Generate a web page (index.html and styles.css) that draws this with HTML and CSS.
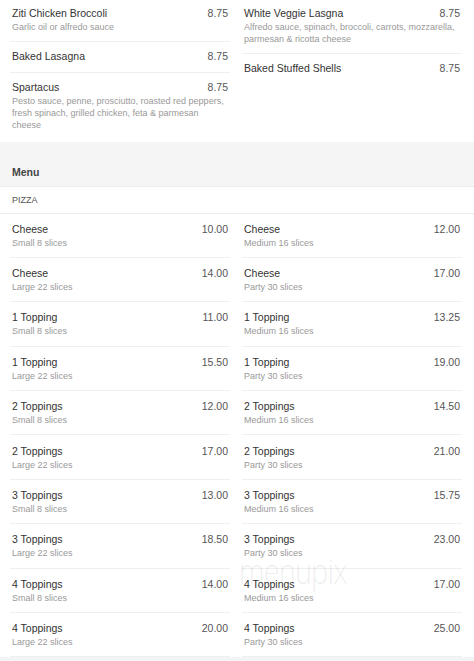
FILE: index.html
```html
<!DOCTYPE html>
<html>
<head>
    <title>Menu</title>
    <link rel="stylesheet" href="styles.css">
</head>
<body>
    <div class="page">
        <div class="items top">
            <div class="col">
                <div class="item">
                    <div class="row"><span class="name">Ziti Chicken Broccoli</span><span class="price">8.75</span></div>
                    <div class="desc">Garlic oil or alfredo sauce</div>
                </div>
                <div class="item">
                    <div class="row"><span class="name">Baked Lasagna</span><span class="price">8.75</span></div>
                </div>
                <div class="item last">
                    <div class="row"><span class="name">Spartacus</span><span class="price">8.75</span></div>
                    <div class="desc">Pesto sauce, penne, prosciutto, roasted red peppers, fresh spinach, grilled chicken, feta &amp; parmesan cheese</div>
                </div>
            </div>
            <div class="col">
                <div class="item">
                    <div class="row"><span class="name">White Veggie Lasgna</span><span class="price">8.75</span></div>
                    <div class="desc">Alfredo sauce, spinach, broccoli, carrots, mozzarella, parmesan &amp; ricotta cheese</div>
                </div>
                <div class="item last">
                    <div class="row"><span class="name">Baked Stuffed Shells</span><span class="price">8.75</span></div>
                </div>
            </div>
        </div>

        <div class="menu-head">Menu</div>
        <div class="category">PIZZA</div>

        <div class="items grid" id="pizza"></div>
        <div class="watermark">menupix</div>
    </div>
    <script>
        const pizzas = [
            ['Cheese', 'Small 8 slices', '10.00'],
            ['Cheese', 'Medium 16 slices', '12.00'],
            ['Cheese', 'Large 22 slices', '14.00'],
            ['Cheese', 'Party 30 slices', '17.00'],
            ['1 Topping', 'Small 8 slices', '11.00'],
            ['1 Topping', 'Medium 16 slices', '13.25'],
            ['1 Topping', 'Large 22 slices', '15.50'],
            ['1 Topping', 'Party 30 slices', '19.00'],
            ['2 Toppings', 'Small 8 slices', '12.00'],
            ['2 Toppings', 'Medium 16 slices', '14.50'],
            ['2 Toppings', 'Large 22 slices', '17.00'],
            ['2 Toppings', 'Party 30 slices', '21.00'],
            ['3 Toppings', 'Small 8 slices', '13.00'],
            ['3 Toppings', 'Medium 16 slices', '15.75'],
            ['3 Toppings', 'Large 22 slices', '18.50'],
            ['3 Toppings', 'Party 30 slices', '23.00'],
            ['4 Toppings', 'Small 8 slices', '14.00'],
            ['4 Toppings', 'Medium 16 slices', '17.00'],
            ['4 Toppings', 'Large 22 slices', '20.00'],
            ['4 Toppings', 'Party 30 slices', '25.00']
        ];
        const list = document.getElementById('pizza');
        pizzas.forEach(p => {
            const item = document.createElement('div');
            item.className = 'item';
            item.innerHTML = '<div class="row"><span class="name">' + p[0] + '</span><span class="price">' + p[2] + '</span></div>'
                + '<div class="desc">' + p[1] + '</div>';
            list.appendChild(item);
        });
    </script>
</body>
</html>
```

FILE: styles.css
```css
body {
    margin: 0;
    background-color: #fff;
    font-family: "Liberation Sans", Arial, sans-serif;
}
.page {
    position: relative;
    border-bottom: 4px solid #f4f4f6;
}
.items {
    padding: 0 12px 0 10px;
}
.items.top {
    display: grid;
    grid-template-columns: 1fr 1fr;
    column-gap: 12px;
    align-items: start;
    margin-top: -1.5px;
    padding-bottom: 3px;
}
.items.grid {
    display: grid;
    grid-template-columns: 1fr 1fr;
    column-gap: 12px;
}
.item {
    padding: 7.5px 2px;
    border-bottom: 1px solid #efefef;
}
.grid .item {
    padding: 8.2px 2px 8.2px;
}
.item.last {
    border-bottom: none;
}
.row {
    display: flex;
    justify-content: space-between;
    line-height: 15px;
}
.name {
    font-size: 10.5px;
    color: #333;
}
.price {
    font-size: 10.5px;
    color: #555;
}
.desc {
    font-size: 9px;
    line-height: 12px;
    color: #999;
}
.menu-head {
    background-color: #f5f5f6;
    padding: 24px 12px 7px;
    font-size: 10.5px;
    line-height: 13px;
    font-weight: bold;
    color: #444;
    border-bottom: 1px solid #ececec;
}
.category {
    padding: 7px 12px;
    font-size: 9px;
    line-height: 12px;
    color: #555;
    border-bottom: 1px solid #ececec;
}
.watermark {
    position: absolute;
    left: 239px;
    top: 549px;
    font-family: "Open Sans", sans-serif;
    font-weight: 300;
    font-size: 34px;
    letter-spacing: -1px;
    transform: scaleX(0.85);
    transform-origin: left top;
    color: rgba(0, 0, 0, 0.08);
    pointer-events: none;
}
```
